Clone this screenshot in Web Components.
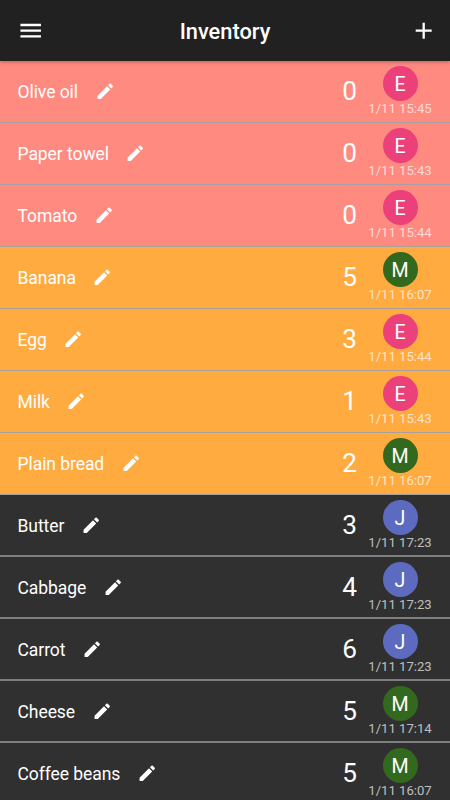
<!DOCTYPE html>
<html lang="en">
<head>
<meta charset="utf-8">
<title>Inventory</title>
<style>
html, body { margin: 0; height: 100%; background: #303030; }
body { overflow: hidden; font-family: Roboto, "Liberation Sans", sans-serif; color: #fff; }
</style>
</head>
<body>
<inventory-app></inventory-app>
<script>
const define = (name, markup, setup) => customElements.define(name, class extends HTMLElement {
  constructor() {
    super();
    this.attachShadow({ mode: 'open' }).innerHTML = markup;
  }
  connectedCallback() { if (setup) setup(this, this.shadowRoot); }
});

const ICONS = {
  menu: 'M3 18h18v-2H3v2zm0-5h18v-2H3v2zm0-7v2h18V6H3z',
  add: 'M19 13h-6v6h-2v-6H5v-2h6V5h2v6h6v2z',
  edit: 'M3 17.25V21h3.75L17.81 9.94l-3.75-3.75L3 17.25zM20.71 7.04c.39-.39.39-1.02 0-1.41l-2.34-2.34c-.39-.39-1.02-.39-1.41 0l-1.83 1.83 3.75 3.75 1.83-1.83z'
};
define('md-icon', `<style>
  :host { display: block; flex: none; width: var(--size, 27.4px); height: var(--size, 27.4px); }
  svg { display: block; width: 100%; height: 100%; fill: currentColor; }
</style><svg viewBox="0 0 24 24"><path/></svg>`,
  (el, root) => root.querySelector('path').setAttribute('d', ICONS[el.getAttribute('name')]));

define('app-bar', `<style>
  :host { display: grid; grid-template-columns: 60px 1fr 60px; align-items: center; box-sizing: border-box;
    height: 61px; flex: none; background: #212121; position: relative; z-index: 1;
    box-shadow: 0 1px 4px rgba(0,0,0,.3); }
  h1 { margin: 2px 0 0; font-size: 21.8px; line-height: 26px; font-weight: 500; text-align: center; }
  .start { padding-left: 16.6px; }
  .end { display: flex; justify-content: flex-end; padding-right: 12.2px; }
</style><div class="start"><slot name="start"></slot></div><h1><slot></slot></h1><div class="end"><slot name="end"></slot></div>`);

define('user-avatar', `<style>
  :host { display: flex; align-items: flex-start; justify-content: center; box-sizing: border-box; width: 35px; height: 35px;
    padding-top: 1px; border-radius: 50%; background: var(--avatar); font-size: 19.6px; line-height: 35px; }
</style><slot></slot>`,
  el => el.style.setProperty('--avatar', { E: '#ec407a', M: '#33691e', J: '#5c6bc0' }[el.textContent]));

define('inventory-item', `<style>
  :host { display: flex; box-sizing: border-box; flex: none; height: 62px;
    padding: 0 18px 0 17.5px; background: #303030; border-bottom: 2px solid #7e7e7e; }
  :host([level="empty"]) { background: #ff8a80; border-bottom: 1px solid #a8a09e; }
  :host([level="low"]) { background: #ffab40; border-bottom: 1px solid #a8a09e; }
  .name { margin-top: 20px; font-size: 17.5px; line-height: 22px; letter-spacing: -.06px; white-space: nowrap; }
  md-icon { --size: 20.5px; margin: 20px 0 0 16.5px; }
  .count { margin: 14px -1.5px 0 auto; width: 40px; text-align: center; font-size: 26.2px; line-height: 32px; }
  .update { display: flex; flex-direction: column; align-items: center; width: 64px; margin-top: 5px; }
  .date { font-size: 13.1px; line-height: 16px; white-space: nowrap; color: rgba(255,255,255,.7); }
</style><span class="name"><slot></slot></span><md-icon name="edit"></md-icon>
<span class="count"></span>
<div class="update"><slot name="user"></slot><span class="date"></span></div>`,
  (el, root) => {
    root.querySelector('.count').textContent = el.getAttribute('count');
    root.querySelector('.date').textContent = el.getAttribute('date');
  });

const ITEMS = [
  ['Olive oil', 0, 'E', '1/11 15:45', 'empty'],
  ['Paper towel', 0, 'E', '1/11 15:43', 'empty'],
  ['Tomato', 0, 'E', '1/11 15:44', 'empty'],
  ['Banana', 5, 'M', '1/11 16:07', 'low'],
  ['Egg', 3, 'E', '1/11 15:44', 'low'],
  ['Milk', 1, 'E', '1/11 15:43', 'low'],
  ['Plain bread', 2, 'M', '1/11 16:07', 'low'],
  ['Butter', 3, 'J', '1/11 17:23', 'ok'],
  ['Cabbage', 4, 'J', '1/11 17:23', 'ok'],
  ['Carrot', 6, 'J', '1/11 17:23', 'ok'],
  ['Cheese', 5, 'M', '1/11 17:14', 'ok'],
  ['Coffee beans', 5, 'M', '1/11 16:07', 'ok']
];
define('inventory-app', `<style>
  :host { display: flex; flex-direction: column; height: 100vh; overflow: hidden; }
  main { display: flex; flex-direction: column; flex: 1; min-height: 0; overflow: hidden; }
</style><app-bar><md-icon slot="start" name="menu"></md-icon>Inventory<md-icon slot="end" name="add"></md-icon></app-bar>
<main>${ITEMS.map(([name, count, user, date, level]) =>
  `<inventory-item count="${count}" date="${date}" level="${level}">${name}<user-avatar slot="user">${user}</user-avatar></inventory-item>`).join('')}</main>`);
</script>
</body>
</html>
